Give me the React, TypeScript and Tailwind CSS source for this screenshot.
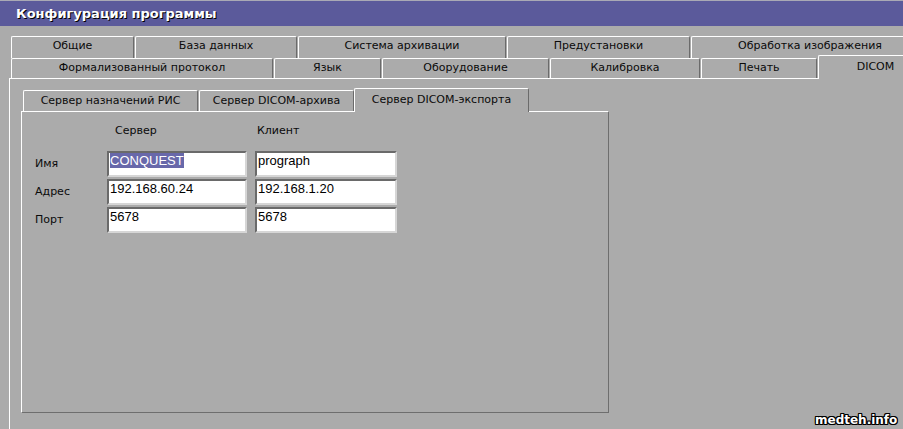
import React from "react";

const tabBase =
  "shrink-0 flex items-center justify-center border-t border-l border-r border-t-white border-l-white border-r-[#6b6b6b] rounded-tl-[2px] rounded-tr-[2px] bg-[#ababab] whitespace-nowrap";

function Field({ value, selected }: { value: string; selected?: boolean }) {
  return (
    <div className="h-[26px] bg-white border-2 border-t-[#6a6a6a] border-l-[#6a6a6a] border-b-[#d6d6d6] border-r-[#d6d6d6] pl-[1px] font-['Liberation_Sans',Arial,sans-serif] text-[13px] leading-[15px] text-black whitespace-nowrap overflow-hidden">
      {selected ? <span className="bg-[#6868aa] text-white">{value}</span> : value}
    </div>
  );
}

export default function App() {
  return (
    <div className="relative w-[903px] h-[429px] overflow-hidden bg-[#ababab] font-['DejaVu_Sans',sans-serif] text-[11px] text-[#0a0a0a]">
      {/* Title bar */}
      <div className="h-[26px] border-t border-[#a9a9b5] bg-[#5b5a9b] flex items-center pl-[16px]">
        <span className="font-['DejaVu_Sans',sans-serif] font-bold text-[13px] text-white [text-shadow:1px_1px_0_#000]">
          Конфигурация программы
        </span>
      </div>

      {/* Outer tabs row 1 */}
      <div className="mt-[10px] flex gap-[1px] pl-[11px] h-[22px]">
        <div className={`${tabBase} w-[123px] pb-[2px]`}>Общие</div>
        <div className={`${tabBase} w-[162px] pb-[2px]`}>База данных</div>
        <div className={`${tabBase} w-[208px] pb-[2px]`}>Система архивации</div>
        <div className={`${tabBase} w-[183px] pb-[2px]`}>Предустановки</div>
        <div className={`${tabBase} w-[238px] pb-[2px]`}>Обработка изображения</div>
      </div>

      {/* Outer tabs row 2 */}
      <div className="flex items-end gap-[1px] pl-[11px] h-[20px]">
        <div className={`${tabBase} h-[20px] w-[262px]`}>Формализованный протокол</div>
        <div className={`${tabBase} h-[20px] w-[107px]`}>Язык</div>
        <div className={`${tabBase} h-[20px] w-[167px]`}>Оборудование</div>
        <div className={`${tabBase} h-[20px] w-[150px]`}>Калибровка</div>
        <div className={`${tabBase} h-[20px] w-[116px]`}>Печать</div>
        <div className="relative z-10 shrink-0 -mb-[1px] h-[24px] w-[114px] flex items-center justify-center border-t border-l border-white rounded-tl-[2px] bg-[#ababab]">
          DICOM
        </div>
      </div>

      {/* Main panel */}
      <div className="ml-[9px] h-[400px] border-t border-l border-white">
        {/* Inner tabs */}
        <div className="pt-[9px] ml-[13px] flex items-end gap-[1px] h-[32px]">
          <div className={`${tabBase} h-[21px] w-[175px]`}>Сервер назначений РИС</div>
          <div className={`${tabBase} h-[21px] w-[155px]`}>Сервер DICOM-архива</div>
          <div className={`${tabBase} relative z-10 -ml-[1px] -mb-[1px] h-[24px] w-[175px]`}>
            Сервер DICOM-экспорта
          </div>
        </div>

        {/* Inner panel */}
        <div className="ml-[11px] w-[588px] h-[302px] border-t border-l border-r border-b border-t-white border-l-white border-r-[#6e6e6e] border-b-[#6e6e6e]">
          <div className="pt-[12px] pl-[13px]">
            <div className="flex h-[14px] leading-[14px]">
              <div className="w-[72px]" />
              <div className="w-[148px] pl-[8px]">Сервер</div>
              <div className="pl-[2px]">Клиент</div>
            </div>
            <div className="mt-[13px] flex flex-col gap-[2px]">
              {[
                { label: "Имя", a: "CONQUEST", b: "prograph", sel: true },
                { label: "Адрес", a: "192.168.60.24", b: "192.168.1.20" },
                { label: "Порт", a: "5678", b: "5678" },
              ].map((r) => (
                <div key={r.label} className="flex items-center">
                  <div className="w-[72px]">{r.label}</div>
                  <div className="w-[140px]">
                    <Field value={r.a} selected={r.sel} />
                  </div>
                  <div className="w-[142px] ml-[8px]">
                    <Field value={r.b} />
                  </div>
                </div>
              ))}
            </div>
          </div>
        </div>
      </div>

      {/* Watermark */}
      <div className="absolute left-[815px] top-[413px] leading-[14px] font-['DejaVu_Sans',sans-serif] font-bold text-[12px] text-white [text-shadow:1px_0_0_#000,-1px_0_0_#000,0_1px_0_#000,0_-1px_0_#000,1px_1px_0_#000,-1px_-1px_0_#000,1px_-1px_0_#000,-1px_1px_0_#000]">
        medteh.info
      </div>
    </div>
  );
}
